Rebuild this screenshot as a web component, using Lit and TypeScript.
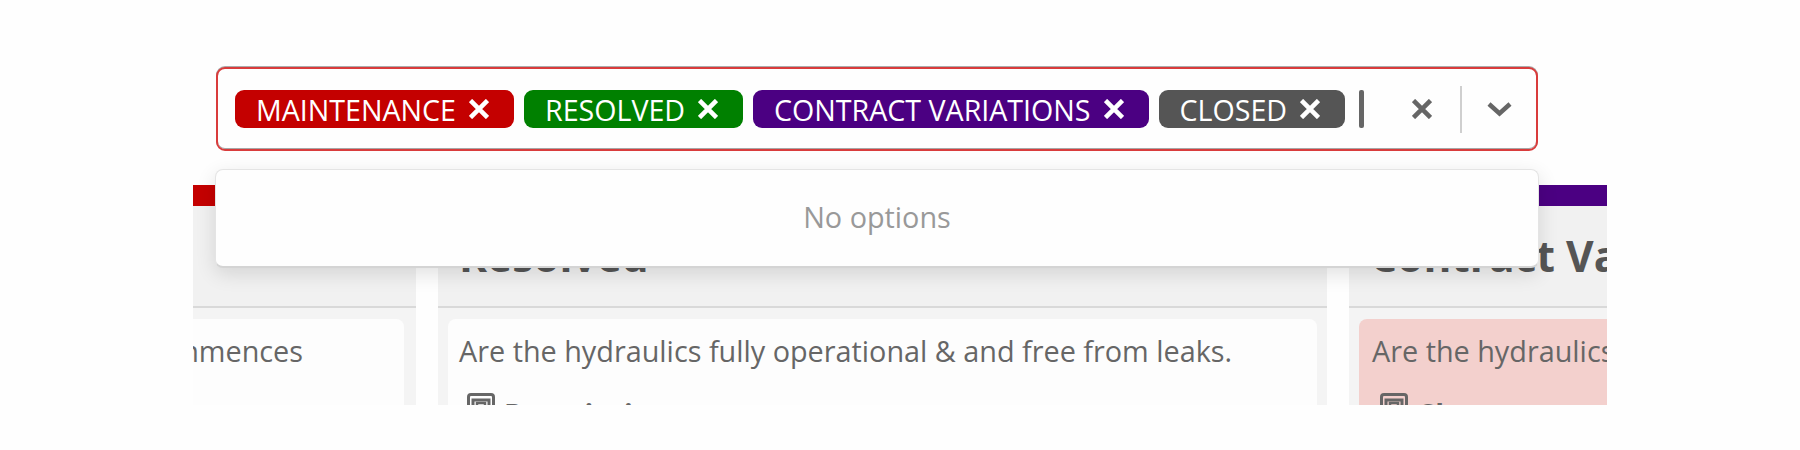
import { LitElement, html, css, svg } from 'lit';
import { customElement } from 'lit/decorators.js';
import { classMap } from 'lit/directives/class-map.js';

const chips = [
  { label: 'MAINTENANCE', color: '#c40000' },
  { label: 'RESOLVED', color: '#008000' },
  { label: 'CONTRACT VARIATIONS', color: '#4b0082' },
  { label: 'CLOSED', color: '#555555' },
];

const columns = [
  { title: 'Maintenance', color: '#c40000', text: 'Check the lift is isolated before any work commences', field: 'Description', flagged: false, end: true },
  { title: 'Resolved', color: '#008000', text: 'Are the hydraulics fully operational & and free from leaks.', field: 'Description', flagged: false, end: false },
  { title: 'Contract Variations', color: '#4b0082', text: 'Are the hydraulics fully operational & and free from leaks.', field: 'Clean', flagged: true, end: false },
];

const crossIcon = svg`<path d="M1.5 1.5 18.5 18.5M18.5 1.5 1.5 18.5" fill="none" stroke="currentColor" stroke-width="4.6"/>`;
const fieldIcon = svg`
  <rect x="1.5" y="1.5" width="25" height="25" rx="2.5" fill="none" stroke="currentColor" stroke-width="3"/>
  <path d="M6 12V7h16v5" fill="none" stroke="currentColor" stroke-width="3"/>
  <rect x="10" y="10" width="8" height="8" fill="none" stroke="currentColor" stroke-width="2.5"/>`;

@customElement('app-root')
export class AppRoot extends LitElement {
  static styles = css`
    :host {
      display: block;
      position: relative;
      width: 1800px;
      height: 450px;
      overflow: hidden;
      background: #fefefe;
      font-family: 'Open Sans', 'Noto Sans', sans-serif;
    }
    .stage {
      padding: 185px 193px 45px;
      height: 220px;
    }
    .board {
      height: 220px;
      overflow: hidden;
    }
    .track {
      display: flex;
      gap: 22px;
      margin-left: -666px;
    }
    .column {
      flex: 0 0 889px;
      height: 220px;
      background: #f4f4f4;
    }
    .bar {
      height: 21px;
    }
    .head {
      display: flex;
      align-items: flex-end;
      box-sizing: border-box;
      height: 102px;
      padding: 0 21px 24px;
      background: #f1f1f1;
      border-bottom: 2px solid #d9d9d9;
    }
    .title {
      margin: 0;
      font-size: 42.5px;
      line-height: 52px;
      font-weight: 700;
      color: #555;
      white-space: nowrap;
    }
    .card {
      margin: 11px 10px 0;
      padding: 12px 11px;
      height: 120px;
      border-radius: 8px;
      background: #fdfdfd;
      color: #666;
    }
    .card.flagged {
      padding-left: 13px;
      background: #f3d0cd;
    }
    .card.end {
      margin-right: 12px;
      padding-right: 101px;
      text-align: right;
    }
    .text {
      margin: 0;
      font-size: 28.8px;
      line-height: 40px;
      white-space: nowrap;
    }
    .field {
      display: flex;
      align-items: flex-start;
      gap: 9px;
      margin: 20px 0 0 8px;
      font-size: 28.8px;
      line-height: 40px;
      font-weight: 700;
    }
    .field svg {
      flex: none;
      width: 28px;
      height: 28px;
      margin-top: 2px;
    }
    .field span {
      margin-top: 3px;
    }
    .select {
      position: absolute;
      left: 215px;
      top: 67px;
      width: 1324px;
      display: flex;
      flex-direction: column;
      gap: 18px;
    }
    .control {
      display: flex;
      align-items: center;
      box-sizing: border-box;
      height: 84px;
      margin: 0 1px;
      padding: 0 24px 0 17px;
      background: #fefefe;
      border: 2px solid #d93c3c;
      border-radius: 9px;
      box-shadow: 0 -1px 0 rgba(90, 90, 90, 0.5), inset 0 -1px 0 rgba(80, 80, 80, 0.5);
    }
    .values {
      display: flex;
      align-items: center;
      gap: 10px;
      flex: 1;
    }
    .chip {
      display: flex;
      align-items: center;
      gap: 13px;
      height: 38px;
      padding: 0 25px 0 21px;
      border-radius: 9px;
      color: #fff;
      font-size: 28.6px;
      white-space: nowrap;
    }
    .chip svg {
      width: 20px;
      height: 20px;
    }
    .caret {
      width: 5px;
      height: 38px;
      margin-left: 4px;
      border-radius: 2px;
      background: #666;
    }
    .clear {
      width: 20px;
      height: 20px;
      color: #666;
    }
    .sep {
      width: 2px;
      height: 47px;
      margin: 0 25px 0 28px;
      background: #cfcfcf;
    }
    .chevron {
      width: 25px;
      height: 16px;
      color: #666;
    }
    .menu {
      display: flex;
      align-items: center;
      justify-content: center;
      box-sizing: border-box;
      height: 99px;
      padding-bottom: 4px;
      background: #fefefe;
      border: 1px solid #e4e4e4;
      border-bottom: 2px solid #d4d4d4;
      border-radius: 8px;
      box-shadow: 0 6px 20px rgba(0, 0, 0, 0.12);
      color: #999;
      font-size: 28.8px;
    }
  `;

  render() {
    return html`
      <div class="stage">
        <div class="board">
          <div class="track">
            ${columns.map(
              (col) => html`
                <section class="column">
                  <div class="bar" style="background: ${col.color}"></div>
                  <header class="head"><h2 class="title">${col.title}</h2></header>
                  <div class=${classMap({ card: true, flagged: col.flagged, end: col.end })}>
                    <p class="text">${col.text}</p>
                    <div class="field">
                      <svg viewBox="0 0 28 28">${fieldIcon}</svg>
                      <span>${col.field}</span>
                    </div>
                  </div>
                </section>
              `
            )}
          </div>
        </div>
      </div>
      <div class="select">
        <div class="control">
          <div class="values">
            ${chips.map(
              (chip) => html`
                <span class="chip" style="background: ${chip.color}">
                  ${chip.label}
                  <svg viewBox="0 0 20 20">${crossIcon}</svg>
                </span>
              `
            )}
            <span class="caret"></span>
          </div>
          <svg class="clear" viewBox="0 0 20 20">${crossIcon}</svg>
          <span class="sep"></span>
          <svg class="chevron" viewBox="0 0 25 16">
            <path d="M2 3 12.5 12.5 23 3" fill="none" stroke="currentColor" stroke-width="4.5"/>
          </svg>
        </div>
        <div class="menu">No options</div>
      </div>
    `;
  }
}
